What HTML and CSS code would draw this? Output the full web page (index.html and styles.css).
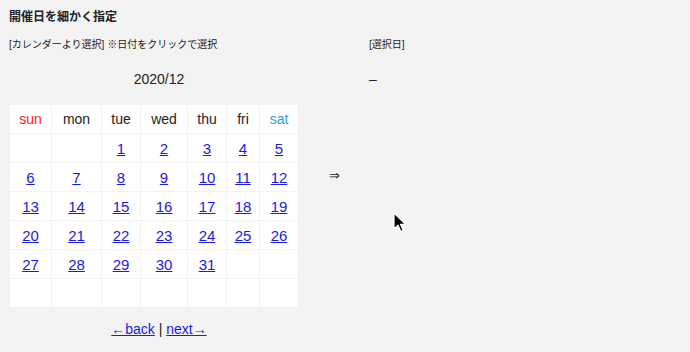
FILE: index.html
```html
<!DOCTYPE html>
<html lang="ja">
<head>
  <meta charset="UTF-8" />
  <meta name="viewport" content="width=device-width, initial-scale=1" />
  <title>開催日を細かく指定</title>
  <link rel="stylesheet" href="styles.css">
</head>
<body>
  <h1>開催日を細かく指定</h1>

  <div class="picker">
    <div class="cal-col">
      <p class="label">[カレンダーより選択] ※日付をクリックで選択</p>
      <p class="month">2020/12</p>
      <table class="cal">
        <colgroup>
          <col class="w-sun"><col class="w-mon"><col class="w-tue"><col class="w-wed"><col class="w-thu"><col class="w-fri"><col class="w-sat">
        </colgroup>
        <tr>
          <th class="sun">sun</th><th>mon</th><th>tue</th><th>wed</th><th>thu</th><th>fri</th><th class="sat">sat</th>
        </tr>
        <tr>
          <td></td><td></td><td><a href="#">1</a></td><td><a href="#">2</a></td><td><a href="#">3</a></td><td><a href="#">4</a></td><td><a href="#">5</a></td>
        </tr>
        <tr>
          <td><a href="#">6</a></td><td><a href="#">7</a></td><td><a href="#">8</a></td><td><a href="#">9</a></td><td><a href="#">10</a></td><td><a href="#">11</a></td><td><a href="#">12</a></td>
        </tr>
        <tr>
          <td><a href="#">13</a></td><td><a href="#">14</a></td><td><a href="#">15</a></td><td><a href="#">16</a></td><td><a href="#">17</a></td><td><a href="#">18</a></td><td><a href="#">19</a></td>
        </tr>
        <tr>
          <td><a href="#">20</a></td><td><a href="#">21</a></td><td><a href="#">22</a></td><td><a href="#">23</a></td><td><a href="#">24</a></td><td><a href="#">25</a></td><td><a href="#">26</a></td>
        </tr>
        <tr>
          <td><a href="#">27</a></td><td><a href="#">28</a></td><td><a href="#">29</a></td><td><a href="#">30</a></td><td><a href="#">31</a></td><td></td><td></td>
        </tr>
        <tr>
          <td></td><td></td><td></td><td></td><td></td><td></td><td></td>
        </tr>
      </table>
      <p class="nav"><a href="#">←back</a> | <a href="#">next→</a></p>
    </div>

    <div class="arrow-col">⇒</div>

    <div class="sel-col">
      <p class="label">[選択日]</p>
      <p class="month">–</p>
    </div>
  </div>

  <svg class="cursor" width="14" height="22" viewBox="0 0 14 22">
    <path d="M1 1 L1 17 L5 13.2 L7.8 19.6 L10.2 18.6 L7.5 12.3 L12.6 12.3 Z" fill="#000" stroke="#fff" stroke-width="1.2" stroke-linejoin="round"/>
  </svg>
</body>
</html>
```

FILE: styles.css
```css
body {
  margin: 0;
  padding: 8px 9px;
  background: #f3f3f3;
  color: #222;
  font-family: "Liberation Sans", "Noto Sans CJK JP", sans-serif;
}
h1 {
  margin: 0;
  font-size: 12px;
  line-height: 18px;
  font-weight: bold;
}
.picker {
  display: flex;
  margin-top: 11px;
}
.cal-col {
  width: 300px;
  text-align: center;
}
.label {
  margin: 0;
  font-size: 10px;
  line-height: 16px;
  text-align: left;
}
.month {
  margin: 16px 0 0;
  font-size: 14px;
  line-height: 20px;
}
.sel-col .month {
  text-align: left;
}
.cal {
  margin-top: 15px;
  border-collapse: separate;
  border-spacing: 1px;
}
.cal th,
.cal td {
  background: #fff;
  height: 28px;
  padding: 0;
  text-align: center;
  vertical-align: middle;
}
.cal th {
  font-weight: normal;
  font-size: 14px;
  color: #222;
}
.cal td {
  font-size: 15px;
}
.cal th.sun {
  color: #f22;
}
.cal th.sat {
  color: #2a9be8;
}
.w-sun { width: 41px; }
.w-mon { width: 49px; }
.w-tue { width: 38px; }
.w-wed { width: 46px; }
.w-thu { width: 38px; }
.w-fri { width: 32px; }
.w-sat { width: 38px; }
a {
  color: #1a1ae6;
}
.nav {
  margin: 11px 0 0;
  font-size: 14px;
  line-height: 20px;
}
.arrow-col {
  width: 40px;
  padding: 129px 0 0 20px;
  font-size: 13px;
  line-height: 20px;
  font-family: "DejaVu Sans", sans-serif;
}
.cursor {
  position: absolute;
  left: 393px;
  top: 212px;
}
```
